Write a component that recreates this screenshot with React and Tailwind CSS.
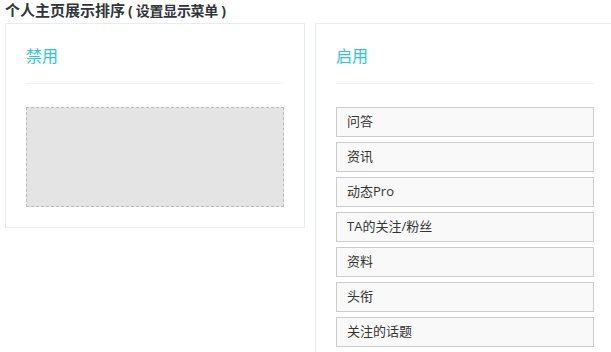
import React from "react";

const items = ["问答", "资讯", "动态Pro", "TA的关注/粉丝", "资料", "头衔", "关注的话题"];

export default function App() {
  return (
    <div
      className="w-[611px] h-[352px] overflow-hidden bg-white pl-[5px]"
      style={{ fontFamily: '"Open Sans", "Noto Sans CJK SC", sans-serif' }}
    >
      <div className="h-[23px] leading-[20px] font-bold text-[#2f353b] whitespace-pre">
        <span className="text-[15px]">个人主页展示排序</span>
        <span className="ml-[3px] text-[14px] tracking-[-0.3px]">( 设置显示菜单 )</span>
      </div>
      <div className="flex gap-[10px] items-start">
        <div className="w-[300px] shrink-0 border border-[#e7ecf1] px-[20px] pt-[20px] pb-[20px]">
          <div className="text-[16px] leading-[24px] text-[#32c5d2] pb-[15px] border-b border-[#eef1f5]">
            禁用
          </div>
          <div className="mt-[23px] h-[100px] bg-[#e4e4e4] border border-dashed border-[#bbb]" />
        </div>
        <div className="w-[300px] shrink-0 border border-[#e7ecf1] px-[20px] pt-[20px] pb-[20px]">
          <div className="text-[16px] leading-[24px] text-[#32c5d2] pb-[15px] border-b border-[#eef1f5]">
            启用
          </div>
          <div className="mt-[23px] flex flex-col gap-[5px]">
            {items.map((t) => (
              <div
                key={t}
                className="h-[30px] flex items-center pl-[10px] bg-[#f9f9f9] border border-[#ccc] text-[13px] text-[#333]"
              >
                {t}
              </div>
            ))}
          </div>
        </div>
      </div>
    </div>
  );
}
